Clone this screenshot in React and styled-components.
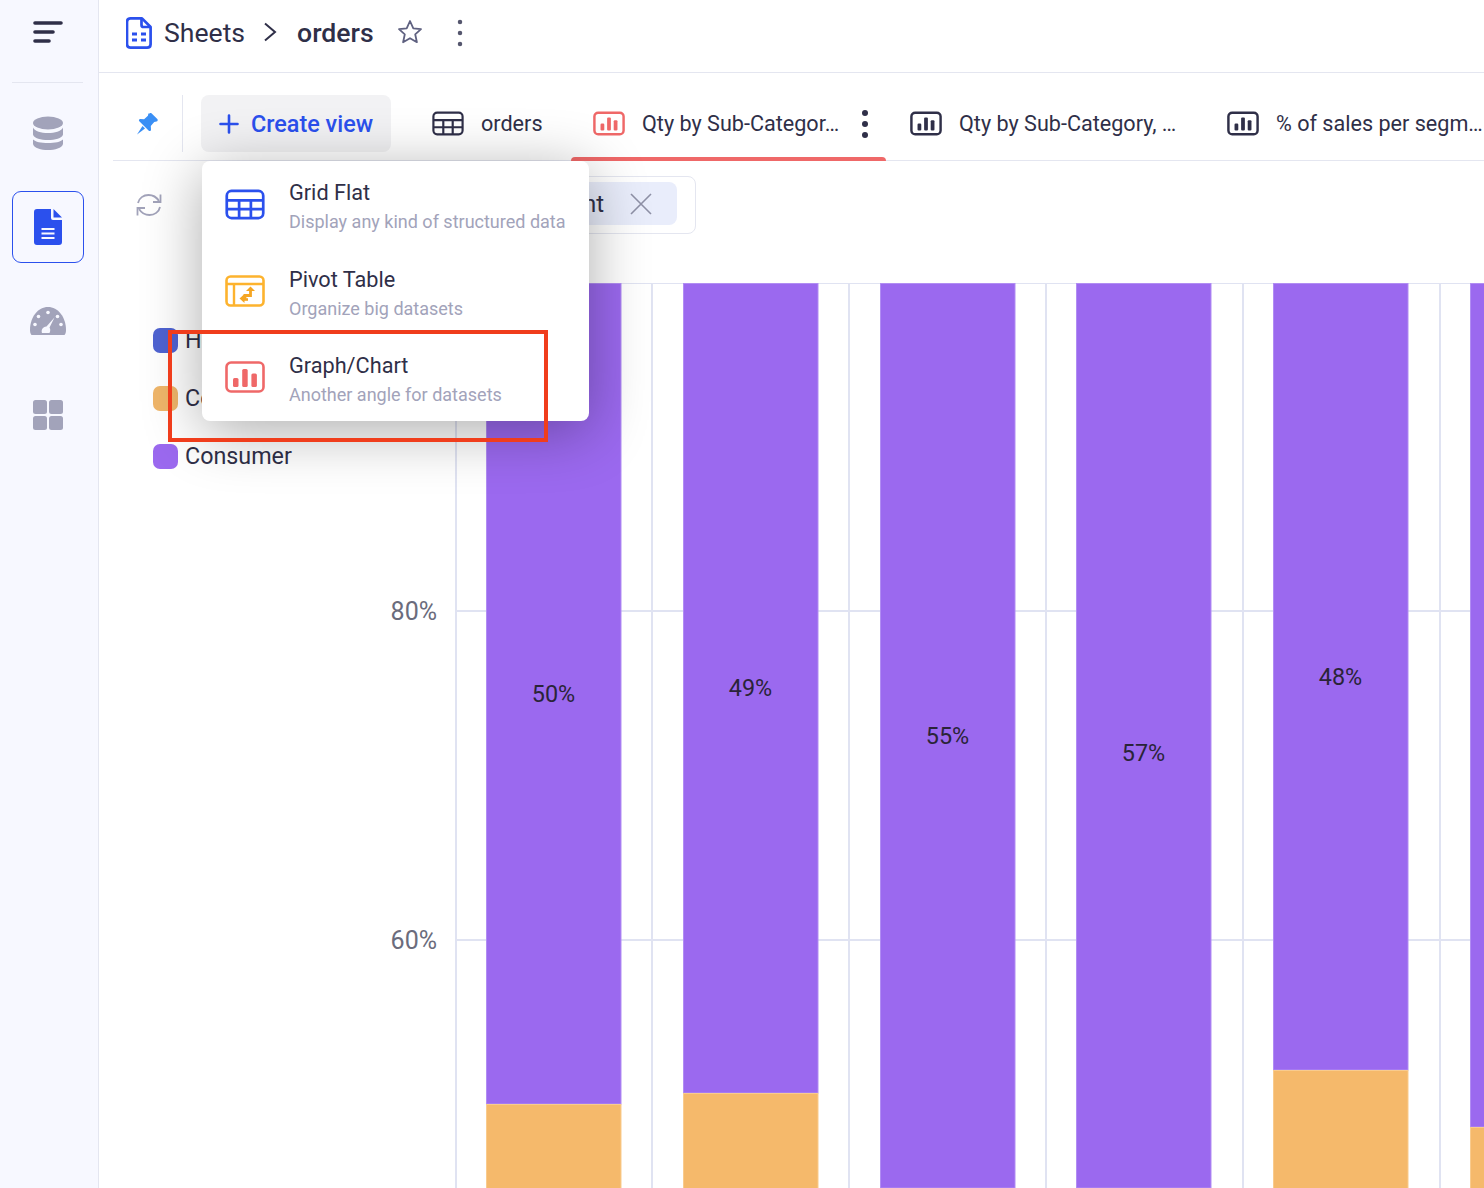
import React from 'react'
import styled, { createGlobalStyle } from 'styled-components';

const BLUE = '#2b50ed';
const DARK = '#2f2f48';
const MUTED = '#a2a3ba';
const RED = '#ef6868';
const PURPLE = '#9b69ef';
const ORANGE = '#f5b96b';

const GlobalStyle = createGlobalStyle`
  html, body {
    margin: 0;
    padding: 0;
    height: 100%;
    background: #ffffff;
  }
  body {
    font-family: Roboto, "Liberation Sans", sans-serif;
    color: ${DARK};
  }
`;

const Page = styled.div`
  display: flex;
  width: 1484px;
  height: 1188px;
  overflow: hidden;
`;

const Sidebar = styled.nav`
  flex: 0 0 98px;
  background: #f7f8ff;
  border-right: 1px solid #e4e6f0;
  display: flex;
  flex-direction: column;
  align-items: flex-start;
`;

const SidebarHead = styled.div`
  width: 71px;
  height: 83px;
  margin-left: 12px;
  border-bottom: 1px solid #e4e6f0;
  display: flex;
  justify-content: center;
  padding-top: 20px;
  box-sizing: border-box;
  margin-bottom: 14px;
`;

const SideList = styled.div`
  display: flex;
  flex-direction: column;
  gap: 22px;
  margin-left: 12px;
`;

const SideItem = styled.div`
  width: 72px;
  height: 72px;
  box-sizing: border-box;
  display: flex;
  align-items: center;
  justify-content: center;
  border-radius: 9px;
  border: 1px solid ${p => (p.$active ? BLUE : 'transparent')};
`;

const Main = styled.main`
  flex: 1;
  min-width: 0;
  position: relative;
  overflow: hidden;
  display: flex;
  flex-direction: column;
`;

const TopBar = styled.header`
  flex: 0 0 auto;
  height: 64px;
  border-bottom: 1px solid #e4e6f0;
  display: flex;
  align-items: center;
  padding: 0 0 8px 27px;
`;

const Crumb = styled.span`
  font-size: 26.6px;
  font-weight: ${p => (p.$strong ? 500 : 400)};
  margin-left: ${p => p.$left || 0}px;
  color: ${DARK};
`;

const IconSlot = styled.span`
  display: inline-flex;
  margin-left: ${p => p.$left || 0}px;
  margin-top: ${p => p.$top || 0}px;
`;

const TabRow = styled.div`
  margin-left: 14px;
  flex: 0 0 auto;
  height: 65px;
  border-bottom: 1px solid #e4e6f0;
  display: flex;
  align-items: flex-start;
  padding-top: 22px;
`;

const PinCell = styled.div`
  flex: 0 0 70px;
  height: 57px;
  box-sizing: border-box;
  border-right: 1px solid #e4e6f0;
  display: flex;
  align-items: center;
  padding-left: 23px;
  margin-right: 18px;
`;

const CreateButton = styled.button`
  flex: 0 0 190px;
  height: 57px;
  border: 0;
  border-radius: 8px;
  background: #f2f2f4;
  display: flex;
  align-items: center;
  gap: 12px;
  padding: 0 0 0 18px;
  font-family: inherit;
  font-size: 23.4px;
  font-weight: 500;
  color: ${BLUE};
  white-space: nowrap;
`;

const Tab = styled.div`
  position: relative;
  height: 65px;
  box-sizing: border-box;
  flex: 0 0 ${p => p.$width}px;
  margin-left: ${p => p.$left || 0}px;
  padding: 0 0 8px 22px;
  display: flex;
  align-items: center;
  gap: 17px;
  font-size: 21.6px;
  white-space: nowrap;
  &::after {
    content: '';
    display: ${p => (p.$active ? 'block' : 'none')};
    position: absolute;
    left: 0;
    right: 0;
    bottom: -1px;
    height: 4px;
    background: ${RED};
    border-radius: 4px 4px 0 0;
  }
`;

const Kebab = styled.span`
  margin-left: 5px;
  display: inline-flex;
`;

const FilterRow = styled.div`
  height: 122px;
  flex: 0 0 122px;
  box-sizing: border-box;
  display: flex;
  align-items: flex-start;
  padding: 15px 0 0 37px;
`;

const RefreshSlot = styled.span`
  display: inline-flex;
  margin: 16px 0 0 0;
`;

const FilterBox = styled.div`
  margin-left: 234px;
  width: 300px;
  height: 58px;
  box-sizing: border-box;
  border: 1px solid #e4e6f0;
  border-radius: 8px;
  padding: 5px 18px 0 24px;
`;

const FilterPill = styled.div`
  height: 43px;
  background: #e9edfb;
  border-radius: 8px;
  display: flex;
  align-items: center;
  justify-content: flex-end;
  gap: 26px;
  padding-right: 25px;
  font-size: 24px;
`;

const ChartRow = styled.div`
  flex: 1;
  display: flex;
  min-height: 0;
`;

const Legend = styled.div`
  flex: 0 0 281px;
  display: flex;
  flex-direction: column;
  gap: 33px;
  padding: 45px 0 0 54px;
  box-sizing: border-box;
`;

const LegendRow = styled.div`
  display: flex;
  align-items: center;
  gap: 7px;
  height: 25px;
  font-size: 23.3px;
  line-height: 23px;
  white-space: nowrap;
`;

const Swatch = styled.span`
  width: 25px;
  height: 25px;
  border-radius: 7px;
  background: ${p => p.$color};
  flex: 0 0 25px;
`;

const Chart = styled.svg`
  display: block;
  flex: 0 0 1104px;
  font-family: Roboto, "Liberation Sans", sans-serif;
`;

const Menu = styled.div`
  position: absolute;
  left: 103px;
  top: 161px;
  width: 387px;
  height: 260px;
  background: #ffffff;
  border-radius: 8px;
  box-shadow: 0 10px 60px rgba(0, 0, 0, 0.33);
  display: flex;
  flex-direction: column;
`;

const MenuItem = styled.div`
  height: 86.6px;
  display: flex;
  align-items: flex-start;
  padding: 17px 0 0 23px;
  box-sizing: border-box;
  gap: 24px;
`;

const MenuIcon = styled.span`
  display: inline-flex;
  margin-top: 10px;
`;

const MenuText = styled.div`
  display: flex;
  flex-direction: column;
  gap: 3px;
`;

const MenuTitle = styled.div`
  font-size: 21.7px;
  line-height: 29px;
`;

const MenuSub = styled.div`
  font-size: 18px;
  line-height: 23px;
  color: ${MUTED};
  white-space: nowrap;
`;

const Callout = styled.div`
  position: absolute;
  left: 69px;
  top: 330px;
  width: 380px;
  height: 112px;
  box-sizing: border-box;
  border: 4px solid #f03d1c;
  pointer-events: none;
`;

const BarsIcon = ({ color }) => (
  <svg width="32" height="25" viewBox="0 0 34 26" fill="none">
    <rect x="1.5" y="1.5" width="31" height="23" rx="4" stroke={color} strokeWidth="2.6" />
    <rect x="8" y="13" width="4" height="7.5" rx="1.2" fill={color} />
    <rect x="15" y="6.5" width="4" height="14" rx="1.2" fill={color} />
    <rect x="22" y="9.5" width="4" height="11" rx="1.2" fill={color} />
  </svg>
);

const GridIcon = ({ color, w = 32, h = 25 }) => (
  <svg width={w} height={h} viewBox="0 0 34 26" fill="none" stroke={color} strokeWidth="2.3">
    <rect x="1.5" y="1.5" width="31" height="23" rx="4" />
    <path d="M1.5 9.5h31M1.5 17h31M12 9.5v15M22 9.5v15" />
  </svg>
);

const PivotIcon = () => (
  <svg width="40" height="33" viewBox="0 0 40 33" fill="none">
    <rect x="1.5" y="1.5" width="37" height="29" rx="4" stroke="#fdb32e" strokeWidth="2.6" />
    <path d="M1.5 9h37M9 9v21.5" stroke="#fdb32e" strokeWidth="2.4" />
    <path d="M25.500 15v5.500h-5.500v3.500" fill="none" stroke="#f5a623" strokeWidth="2.800" />
    <path d="M25.500 11.500l4.500 4.500h-9z" fill="#f5a623" />
    <path d="M14.500 23.500l5-4.500v9z" fill="#f5a623" />
    <path d="M18 24.500h5" stroke="#f5a623" strokeWidth="2.600" />
  </svg>
);

const LargeBars = () => (
  <svg width="40" height="33" viewBox="0 0 40 33" fill="none">
    <rect x="1.5" y="1.5" width="37" height="29" rx="4.5" stroke={RED} strokeWidth="2.6" />
    <rect x="8" y="17" width="5.5" height="9" rx="1.5" fill={RED} />
    <rect x="17.2" y="8" width="5.5" height="18" rx="1.5" fill={RED} />
    <rect x="26.4" y="12.5" width="5.5" height="13.5" rx="1.5" fill={RED} />
  </svg>
);

const DotsIcon = ({ size = 5, gap = 11, color = DARK }) => (
  <svg width="8" height={gap * 2 + 8} viewBox={`0 0 8 ${gap * 2 + 8}`} fill={color}>
    <circle cx="4" cy="4" r={size / 2} />
    <circle cx="4" cy={4 + gap} r={size / 2} />
    <circle cx="4" cy={4 + gap * 2} r={size / 2} />
  </svg>
);

const DatabaseIcon = () => (
  <svg width="30" height="34" viewBox="0 0 30 34" fill={MUTED}>
    <ellipse cx="15" cy="7" rx="15" ry="6.5" />
    <path d="M0 11.500c2 4 8 5.500 15 5.500s13-1.500 15-5.500v7c-1 4-8 5.500-15 5.500S1 22.500 0 18.500z" />
    <path d="M0 23.500c2.500 2.500 8 3.500 15 3.500s12.500-1 15-3.500v4.500c-1 4-8 6-15 6S1 32 0 28z" />
  </svg>
);

const DocIcon = () => (
  <svg width="28" height="36" viewBox="0 0 28 36">
    <path d="M3 0h14v9a2 2 0 0 0 2 2h9v22a3 3 0 0 1-3 3H3a3 3 0 0 1-3-3V3a3 3 0 0 1 3-3z" fill={BLUE} />
    <path d="M19.500 0L28 8.500h-8.500z" fill={BLUE} />
    <path d="M7.500 20h13M7.500 24.500h13M7.500 29h13" stroke="#f7f8ff" strokeWidth="2" />
  </svg>
);

const GaugeIcon = () => (
  <svg width="36" height="28" viewBox="0 0 36 28">
    <path d="M0 23C0 10 8 0 18 0s18 10 18 23c0 2-.5 4-1.500 5H1.500C.5 27 0 25 0 23z" fill={MUTED} />
    <g fill="#f7f8ff">
      <circle cx="18" cy="5.500" r="1.800" />
      <circle cx="8.500" cy="9.500" r="1.800" />
      <circle cx="27.500" cy="9.500" r="1.800" />
      <circle cx="5" cy="17.500" r="1.800" />
      <circle cx="31" cy="17.500" r="1.800" />
      <path d="M24.500 10.500l-5 10c1 1.500 1 3.500 0 5.500h-7.500c-1-3 .5-6 4.500-6.500z" />
    </g>
  </svg>
);

const TilesIcon = () => (
  <svg width="32" height="32" viewBox="0 0 32 32" fill={MUTED}>
    <rect x="1" y="1" width="14" height="14" rx="2.500" />
    <rect x="17" y="1" width="14" height="14" rx="2.500" />
    <rect x="1" y="17" width="14" height="14" rx="2.500" />
    <rect x="17" y="17" width="14" height="14" rx="2.500" />
  </svg>
);

const MenuLines = () => (
  <svg width="30" height="24" viewBox="0 0 30 24" stroke={DARK} strokeWidth="3.600" strokeLinecap="round">
    <path d="M2 3h26M2 12h18M2 21h14" />
  </svg>
);

const SheetIcon = () => (
  <svg width="26" height="32" viewBox="0 0 26 32" fill="none" stroke={BLUE} strokeWidth="2.700">
    <path d="M4.500 1.400h11.500l8.600 8.600v17.300a3.500 3.500 0 0 1-3.500 3.300h-16.600a3.500 3.500 0 0 1-3.500-3.300V4.700a3.500 3.500 0 0 1 3.500-3.300z" strokeLinejoin="round" />
    <path d="M15.500 1.500v6.500a2 2 0 0 0 2 2h7" />
    <path d="M6 17h5M15 17h5M6 23h5M15 23h5" strokeWidth="2.800" />
  </svg>
);

const Chevron = () => (
  <svg width="14" height="20" viewBox="0 0 14 20" fill="none" stroke={DARK} strokeWidth="2">
    <path d="M2 1.500l10 8.500-10 8.500" />
  </svg>
);

const StarIcon = () => (
  <svg width="26" height="26" viewBox="0 0 26 26" fill="none" stroke="#5f6180" strokeWidth="1.800" strokeLinejoin="round">
    <path d="M13 2l3.300 7.300 7.700.8-5.800 5.200 1.700 7.900-6.900-4-6.900 4 1.700-7.900L2 10.100l7.700-.8z" />
  </svg>
);

const PinIcon = () => (
  <svg width="22" height="22" viewBox="0 0 22 22" fill="#3a8ff5">
    <path d="M13.500 0.500a1.500 1.500 0 0 1 2.200 0l5.600 5.600a1.500 1.500 0 0 1-.8 2.500l-2.300.5-3.400 3.800.2 3.800a1.300 1.300 0 0 1-2.200 1L3.300 8.200a1.300 1.300 0 0 1 1-2.200l3.800.2 3.800-3.400.5-2.300z" />
    <path d="M6.500 13l2.500 2.500L1 21.500z" />
  </svg>
);

const PlusIcon = () => (
  <svg width="20" height="20" viewBox="0 0 20 20" stroke={BLUE} strokeWidth="2.600" strokeLinecap="round">
    <path d="M10 1.500v17M1.500 10h17" />
  </svg>
);

const RefreshIcon = () => (
  <svg width="26" height="26" viewBox="0 0 26 26" fill="none" stroke={MUTED} strokeWidth="1.800">
    <path d="M2 11C3 6 7.500 3 12.500 3c4.500 0 8 2 10.500 6" />
    <path d="M24.500 2.500V10h-7.500" />
    <path d="M24 15c-1 5-5.500 8-10.500 8-4.500 0-8-2-10.500-6" />
    <path d="M1.500 23.500V16H9" />
  </svg>
);

const CloseIcon = () => (
  <svg width="22" height="22" viewBox="0 0 22 22" stroke="#8e90a6" strokeWidth="1.600">
    <path d="M1 1l20 20M21 1L1 21" />
  </svg>
);

const gridLines = [456, 652, 849, 1046, 1243, 1440];
const bars = [
  { x: 486, split: 1104, label: '50%', labelY: 694 },
  { x: 683, split: 1093, label: '49%', labelY: 688 },
  { x: 880, split: 1188, label: '55%', labelY: 736 },
  { x: 1076, split: 1188, label: '57%', labelY: 753 },
  { x: 1273, split: 1070, label: '48%', labelY: 677 },
  { x: 1470, split: 1127 },
];

const legend = [
  { name: 'Home Office', color: '#4f63d2' },
  { name: 'Corporate', color: '#f0b66a' },
  { name: 'Consumer', color: PURPLE },
];

const menu = [
  { title: 'Grid Flat', sub: 'Display any kind of structured data', icon: <GridIcon color={BLUE} w={40} h={33} /> },
  { title: 'Pivot Table', sub: 'Organize big datasets', icon: <PivotIcon /> },
  { title: 'Graph/Chart', sub: 'Another angle for datasets', icon: <LargeBars /> },
];

export default function App () {
  return (
    <Page>
      <GlobalStyle />
      <Sidebar>
        <SidebarHead><MenuLines /></SidebarHead>
        <SideList>
          <SideItem><DatabaseIcon /></SideItem>
          <SideItem $active><DocIcon /></SideItem>
          <SideItem><GaugeIcon /></SideItem>
          <SideItem><TilesIcon /></SideItem>
        </SideList>
      </Sidebar>
      <Main>
        <TopBar>
          <IconSlot $top={2}><SheetIcon /></IconSlot>
          <Crumb $left={12}>Sheets</Crumb>
          <IconSlot $left={18}><Chevron /></IconSlot>
          <Crumb $strong $left={20}>orders</Crumb>
          <IconSlot $left={23}><StarIcon /></IconSlot>
          <IconSlot $left={33} $top={2}><DotsIcon size={4.5} color="#55566e" /></IconSlot>
        </TopBar>
        <TabRow>
          <PinCell><PinIcon /></PinCell>
          <CreateButton><PlusIcon />Create view</CreateButton>
          <Tab $width={161} $left={19}><GridIcon color={DARK} />orders</Tab>
          <Tab $width={315} $active><BarsIcon color={RED} />Qty by Sub-Categor…<Kebab><DotsIcon size={6} /></Kebab></Tab>
          <Tab $width={317} $left={2}><BarsIcon color={DARK} />Qty by Sub-Category, …</Tab>
          <Tab $width={290}><BarsIcon color={DARK} />% of sales per segm…</Tab>
        </TabRow>
        <FilterRow>
          <RefreshSlot><RefreshIcon /></RefreshSlot>
          <FilterBox>
            <FilterPill>Segment<CloseIcon /></FilterPill>
          </FilterBox>
        </FilterRow>
        <ChartRow>
          <Legend>
            {legend.map(item => (
              <LegendRow key={item.name}><Swatch $color={item.color} />{item.name}</LegendRow>
            ))}
          </Legend>
          <Chart width="1104" height="905" viewBox="380 283 1104 905">
            {gridLines.map(x => (
              <line key={x} x1={x} x2={x} y1="283" y2="1188" stroke="#e0e3f2" strokeWidth="2" />
            ))}
            {[283, 611, 940].map(y => (
              <line key={y} x1="456" x2="1484" y1={y} y2={y} stroke="#e0e3f2" strokeWidth="2" />
            ))}
            <text x="437" y="620" textAnchor="end" fontSize="25" fill="#6b6c7c">80%</text>
            <text x="437" y="949" textAnchor="end" fontSize="25" fill="#6b6c7c">60%</text>
            {bars.map(bar => (
              <g key={bar.x}>
                <rect x={bar.x + 0.5} y="283.5" width="134.500" height={bar.split - 283.5} fill={PURPLE} stroke="#b18df3" strokeWidth="1" />
                <rect x={bar.x + 0.5} y={bar.split + 0.5} width="134.500" height={1188 - bar.split} fill={ORANGE} stroke="#f9cb8d" strokeWidth="1" />
                {bar.label && (
                  <text x={bar.x + 67.500} y={bar.labelY + 8} textAnchor="middle" fontSize="23.4" fill="#2a2438">{bar.label}</text>
                )}
              </g>
            ))}
          </Chart>
        </ChartRow>
        <Menu>
          {menu.map(item => (
            <MenuItem key={item.title}>
              <MenuIcon>{item.icon}</MenuIcon>
              <MenuText>
                <MenuTitle>{item.title}</MenuTitle>
                <MenuSub>{item.sub}</MenuSub>
              </MenuText>
            </MenuItem>
          ))}
        </Menu>
        <Callout />
      </Main>
    </Page>
  )
}
